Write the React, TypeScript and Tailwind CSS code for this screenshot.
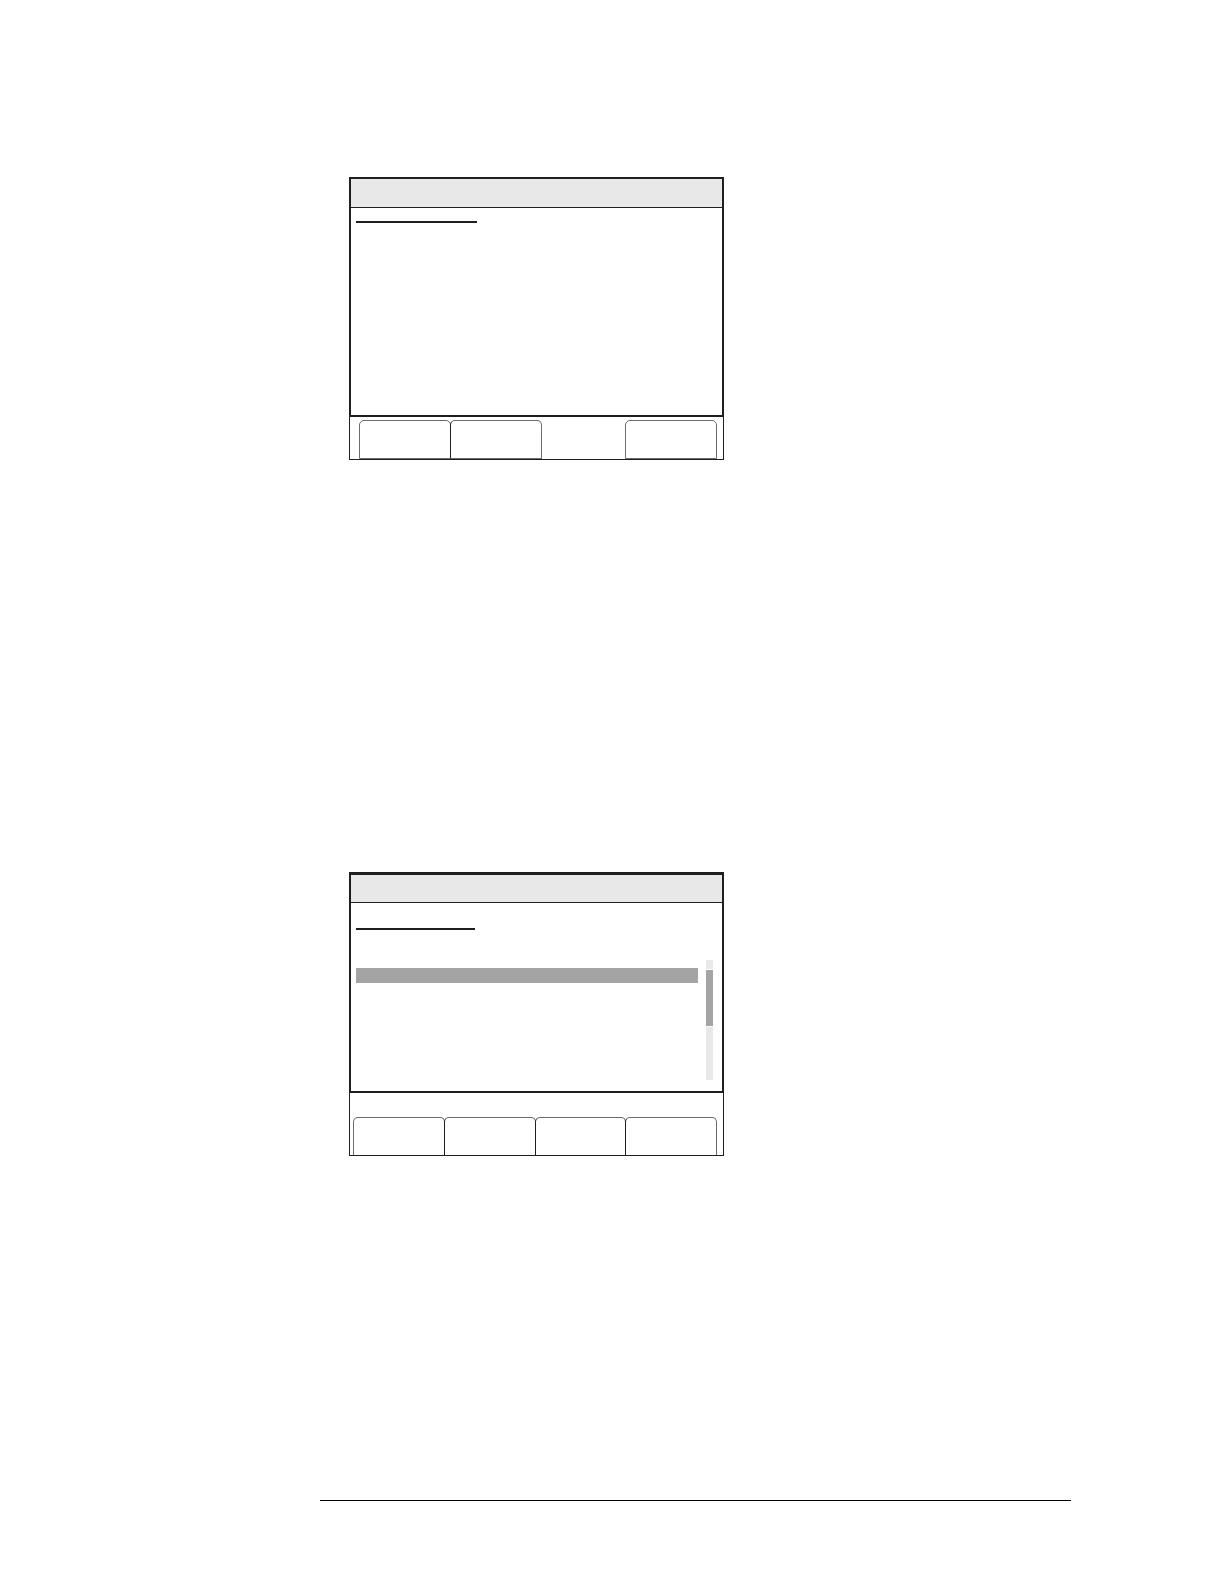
import React from 'react';
import clsx from 'clsx';

interface SoftKeyProps {
  label: string;
  className?: string;
}

function SoftKey({ label, className }: SoftKeyProps) {
  return (
    <button
      type="button"
      aria-label={label}
      className={clsx('rounded-t-[5px] border border-[#6b6b6b] bg-white', className)}
    />
  );
}

function StatusScreen() {
  return (
    <section className="w-full max-w-[375px] bg-white">
      <div className="border-2 border-[#1f1f21]">
        <header className="h-[29px] border-b border-[#1f1f21] bg-[#e8e8e8]" />
        <div className="h-[207px] px-[5px] pt-[13px]">
          <div className="h-[2px] w-[121px] bg-[#1f1f21]" />
        </div>
      </div>
      <div className="flex h-[43px] border-x border-b border-[#1f1f21] pt-[3px] pr-1.5 pl-[9px]">
        <SoftKey label="F1" className="h-[39px] w-[92px]" />
        <SoftKey label="F2" className="-ml-px h-[39px] w-[92px] border-l-[#1f1f21]" />
        <SoftKey label="F4" className="ml-auto h-[39px] w-[92px]" />
      </div>
    </section>
  );
}

function ListScreen() {
  return (
    <section className="w-full max-w-[375px] bg-white">
      <div className="border-2 border-t-[3px] border-[#1f1f21]">
        <header className="h-7 border-b border-[#1f1f21] bg-[#e8e8e8]" />
        <div className="h-[188px] pt-[25px] pr-[9px] pl-[5px]">
          <div className="h-[2px] w-[119px] bg-[#1f1f21]" />
          <div className="mt-[30px] flex gap-2">
            <div className="mt-2 h-[15px] flex-1 bg-[#a4a4a4]" />
            {/* scroll track with its thumb */}
            <div className="flex h-[120px] w-[7px] flex-col gap-px">
              <div className="h-[9px] bg-[#e8e8e8]" />
              <div className="h-14 bg-[#a4a4a4]" />
              <div className="flex-1 bg-[#e8e8e8]" />
            </div>
          </div>
        </div>
      </div>
      <div className="flex h-[63px] items-end border-x border-b border-[#1f1f21] pr-1.5 pl-[3px]">
        <SoftKey label="F1" className="h-[38px] flex-1 border-b-0" />
        <SoftKey label="F2" className="-ml-px h-[38px] flex-1 border-b-0 border-l-[#1f1f21]" />
        <SoftKey label="F3" className="-ml-px h-[38px] flex-1 border-b-0 border-l-[#1f1f21]" />
        <SoftKey label="F4" className="-ml-px h-[38px] flex-1 border-b-0 border-l-[#1f1f21]" />
      </div>
    </section>
  );
}

export default function App() {
  return (
    <main className="flex min-h-screen flex-col bg-white pt-[177px] pr-[153px] pb-[83px] pl-[320px] font-['Liberation_Sans',sans-serif]">
      <div className="flex flex-1 flex-col gap-[412px] pl-[29px]">
        <StatusScreen />
        <ListScreen />
      </div>
      <hr className="border-t border-black" />
    </main>
  );
}
